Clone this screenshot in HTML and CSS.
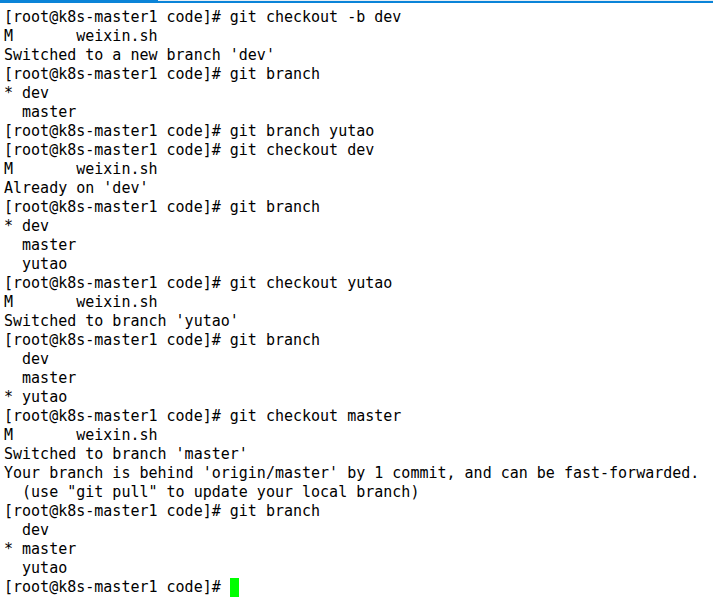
FILE: index.html
```html
<!DOCTYPE html>
<html>
<head>
<meta charset="utf-8">
<link rel="stylesheet" href="styles.css">
</head>
<body>
<div class="topbar"><div class="seg-left"></div><div class="seg-right"></div></div>
<pre class="term">[root@k8s-master1 code]# git checkout -b dev
M       weixin.sh
Switched to a new branch 'dev'
[root@k8s-master1 code]# git branch
* dev
  master
[root@k8s-master1 code]# git branch yutao
[root@k8s-master1 code]# git checkout dev
M       weixin.sh
Already on 'dev'
[root@k8s-master1 code]# git branch
* dev
  master
  yutao
[root@k8s-master1 code]# git checkout yutao
M       weixin.sh
Switched to branch 'yutao'
[root@k8s-master1 code]# git branch
  dev
  master
* yutao
[root@k8s-master1 code]# git checkout master
M       weixin.sh
Switched to branch 'master'
Your branch is behind 'origin/master' by 1 commit, and can be fast-forwarded.
  (use "git pull" to update your local branch)
[root@k8s-master1 code]# git branch
  dev
* master
  yutao
[root@k8s-master1 code]# <span class="cursor"> </span></pre>
</body>
</html>
```
FILE: styles.css
```css
html, body {
  margin: 0;
  padding: 0;
  background: #ffffff;
}
body {
  width: 713px;
  height: 598px;
  overflow: hidden;
}
.topbar {
  display: flex;
  height: 3px;
}
.seg-left {
  width: 158px;
  background: #0a84d8;
}
.seg-right {
  flex: 1;
  border-top: 1px solid #e8eef4;
  background: #0a84d8;
}
.term {
  margin: 5px 0 0 0;
  padding: 0 0 0 4px;
  font-family: "DejaVu Sans Mono", monospace;
  font-size: 15px;
  line-height: 19px;
  color: #000000;
  white-space: pre;
}
.cursor {
  display: inline-block;
  width: 9px;
  height: 19px;
  vertical-align: top;
  background: #00ff00;
}
```
